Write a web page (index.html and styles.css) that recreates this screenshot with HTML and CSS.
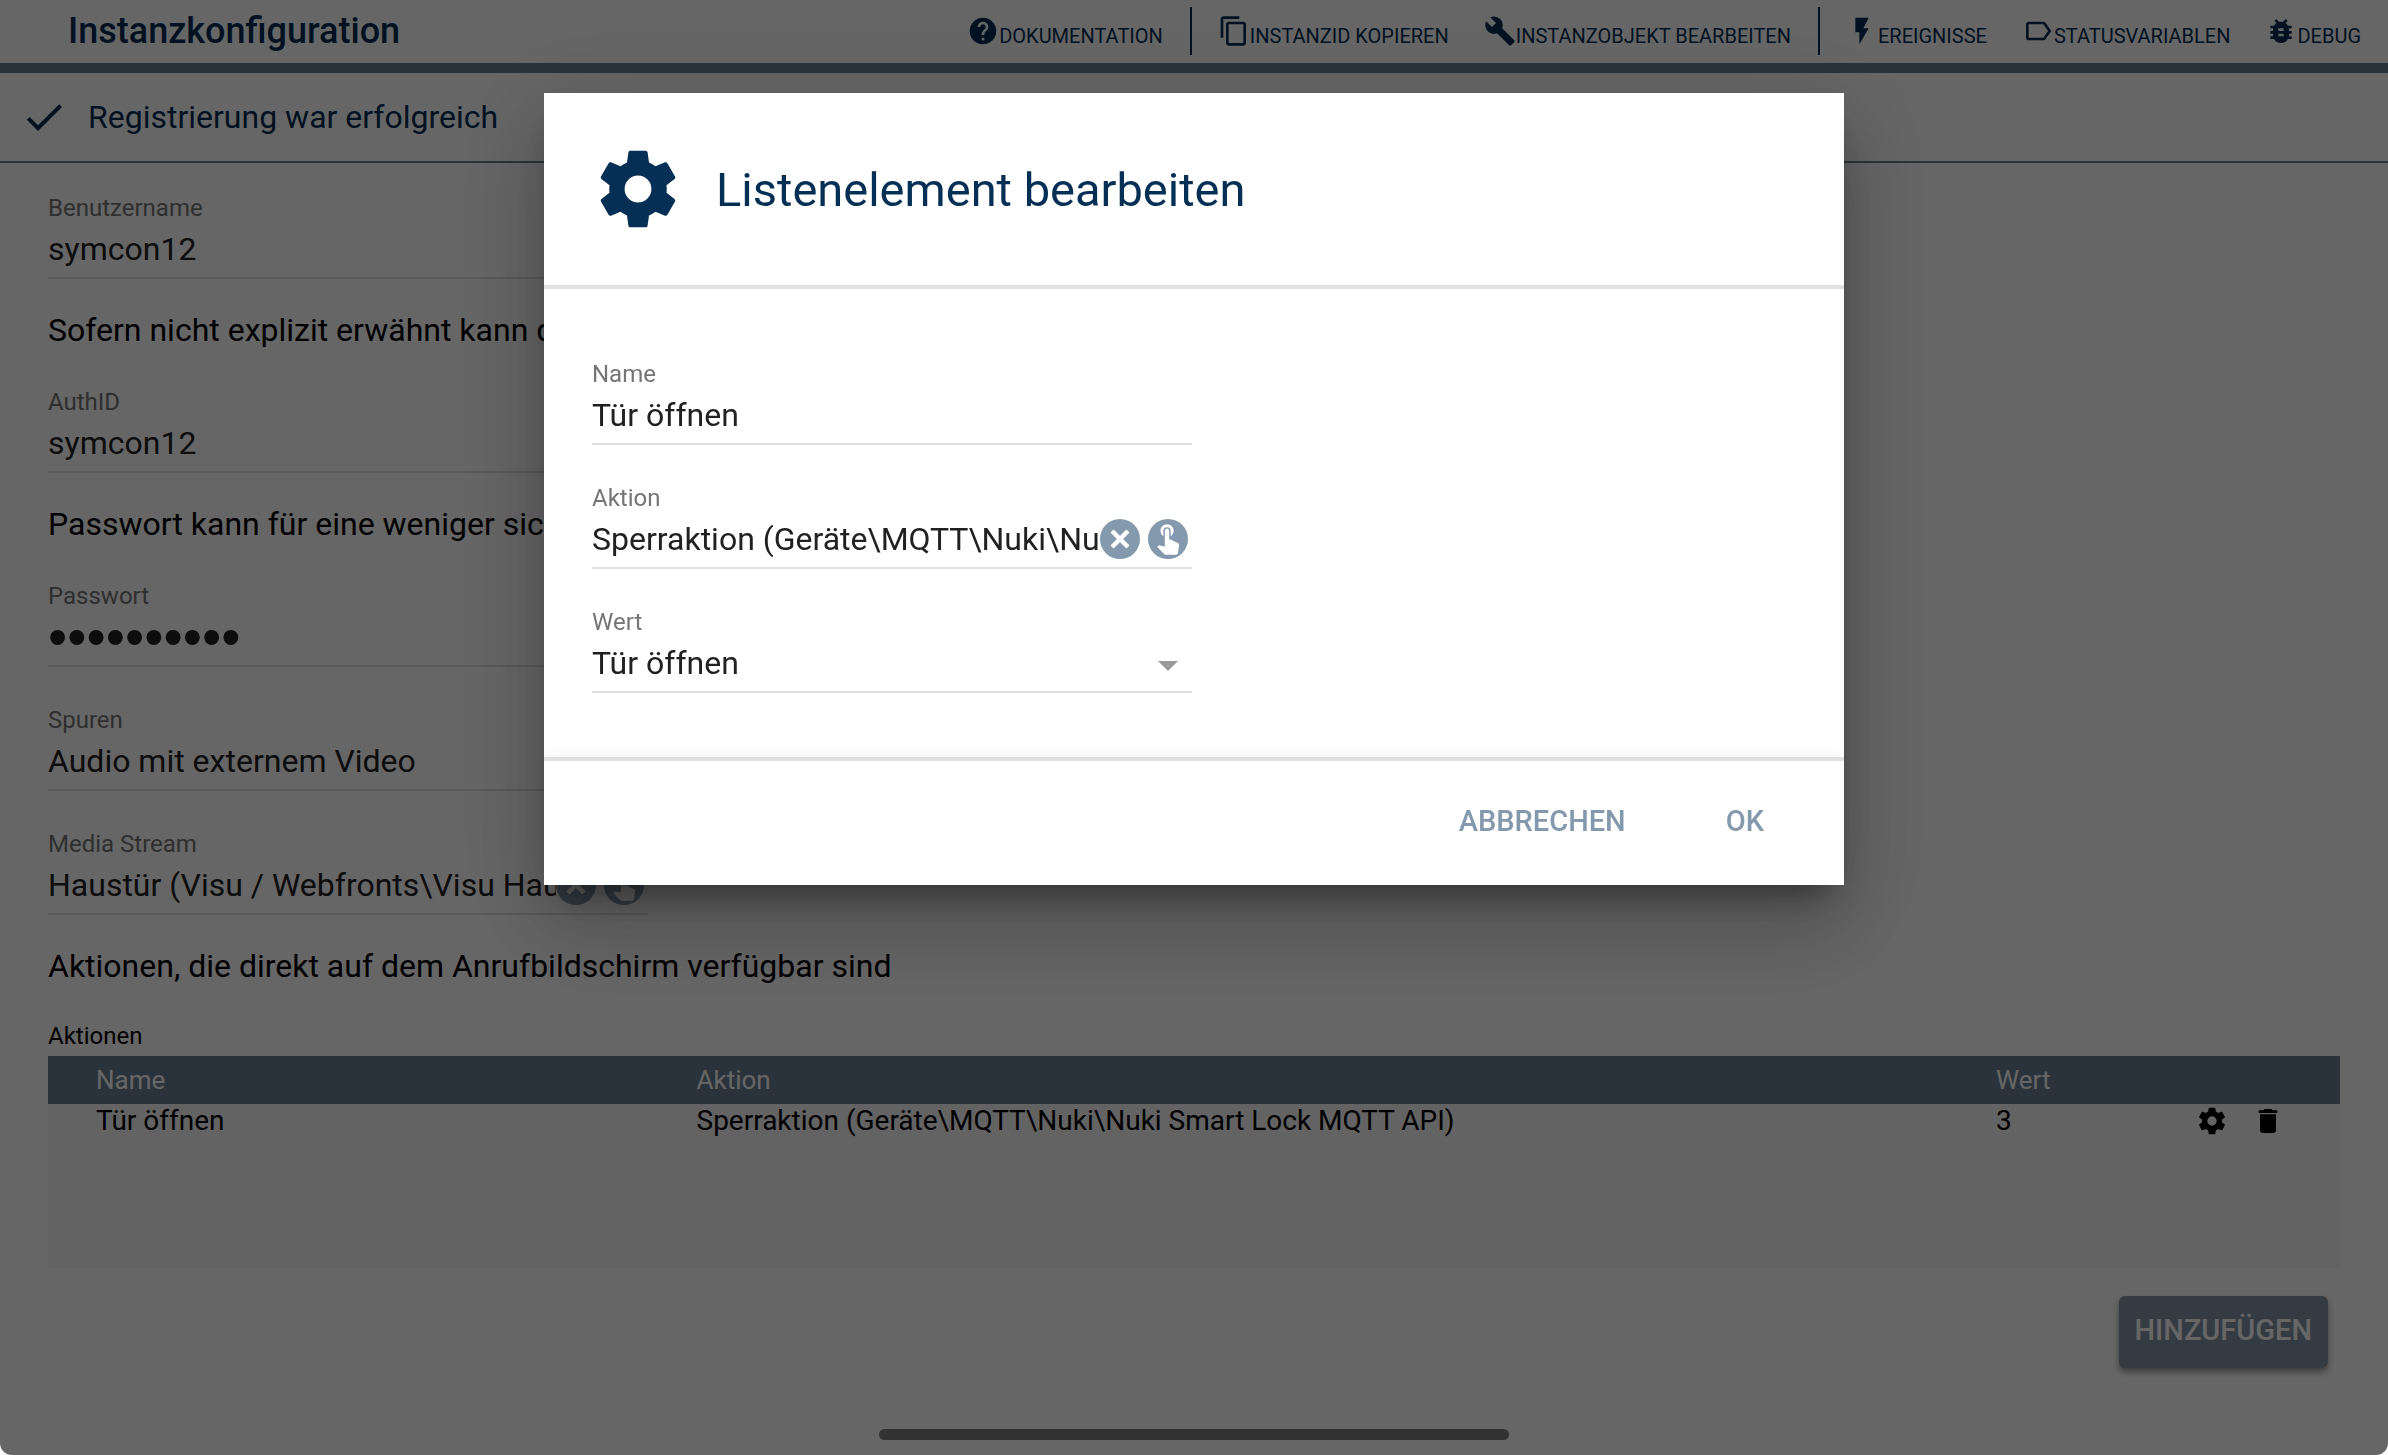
FILE: index.html
```html
<!DOCTYPE html>
<html lang="de">
<head>
    <meta charset="UTF-8">
    <meta name="viewport" content="width=device-width, initial-scale=1.0">
    <title>Instanzkonfiguration</title>
    <link rel="stylesheet" href="styles.css">
</head>
<body>
    <!-- shared icons -->
    <svg class="sprite" aria-hidden="true">
        <symbol id="cog" viewBox="0 0 24 24"><path d="M12 15.5A3.5 3.5 0 0 1 8.5 12 3.5 3.5 0 0 1 12 8.5a3.5 3.5 0 0 1 3.5 3.5 3.5 3.5 0 0 1-3.5 3.5m7.43-2.53c.04-.32.07-.64.07-.97s-.03-.66-.07-1l2.11-1.63c.19-.15.24-.42.12-.64l-2-3.46c-.12-.22-.39-.31-.61-.22l-2.49 1c-.52-.39-1.06-.73-1.69-.98l-.37-2.65A.506.506 0 0 0 14 2h-4c-.25 0-.46.18-.5.42l-.37 2.65c-.63.25-1.17.59-1.69.98l-2.49-1c-.22-.09-.49 0-.61.22l-2 3.46c-.13.22-.07.49.12.64L4.57 11c-.04.34-.07.67-.07 1s.03.65.07.97l-2.11 1.66c-.19.15-.25.42-.12.64l2 3.46c.12.22.39.3.61.22l2.49-1.01c.52.4 1.06.74 1.69.99l.37 2.65c.04.24.25.42.5.42h4c.25 0 .46-.18.5-.42l.37-2.65c.63-.26 1.17-.59 1.69-.99l2.49 1.01c.22.08.49 0 .61-.22l2-3.46c.12-.22.07-.49-.12-.64z"/></symbol>
        <symbol id="close" viewBox="0 0 24 24"><path d="M6 6L18 18M18 6L6 18" fill="none" stroke="currentColor" stroke-width="3.400"/></symbol>
        <symbol id="touch" viewBox="0.500 0.800 24 24"><path d="M9 11.24V7.5a2.5 2.5 0 0 1 5 0v3.74c1.21-.81 2-2.18 2-3.74C16 5.01 13.99 3 11.5 3S7 5.01 7 7.5c0 1.56.79 2.93 2 3.74zm9.84 4.63l-4.54-2.26c-.17-.07-.35-.11-.54-.11H13v-6c0-.83-.67-1.5-1.5-1.5S10 6.67 10 7.5v10.74l-3.43-.72c-.08-.01-.15-.03-.24-.03-.31 0-.59.13-.79.33l-.79.8 4.94 4.94c.27.27.65.44 1.06.44h6.79c.75 0 1.33-.55 1.44-1.28l.75-5.27c.01-.07.02-.14.02-.2 0-.62-.38-1.16-.91-1.38z"/></symbol>
    </svg>

    <header class="topbar">
        <h1>Instanzkonfiguration</h1>
        <nav class="tools">
            <button type="button"><svg viewBox="0 0 24 24"><path d="M12 2C6.48 2 2 6.48 2 12s4.48 10 10 10 10-4.48 10-10S17.52 2 12 2zm1 17h-2v-2h2v2zm2.07-7.75l-.9.92C13.45 12.9 13 13.5 13 15h-2v-.5c0-1.1.45-2.1 1.17-2.83l1.24-1.26c.37-.36.59-.86.59-1.41 0-1.1-.9-2-2-2s-2 .9-2 2H8c0-2.21 1.79-4 4-4s4 1.79 4 4c0 .88-.36 1.68-.93 2.25z"/></svg>DOKUMENTATION</button>
            <span class="divider"></span>
            <button type="button"><svg viewBox="0 0 24 24"><path d="M16 1H4c-1.1 0-2 .9-2 2v14h2V3h12V1zm3 4H8c-1.1 0-2 .9-2 2v14c0 1.1.9 2 2 2h11c1.1 0 2-.9 2-2V7c0-1.1-.9-2-2-2zm0 16H8V7h11v14z"/></svg>INSTANZID KOPIEREN</button>
            <button type="button"><svg viewBox="0 0 24 24"><path d="M22.7 19l-9.1-9.1c.9-2.3.4-5-1.5-6.9-2-2-5-2.4-7.4-1.3L9 6 6 9 1.6 4.7C.4 7.1.9 10.1 2.9 12.1c1.9 1.9 4.6 2.4 6.9 1.5l9.1 9.1c.4.4 1 .4 1.4 0l2.3-2.3c.5-.4.5-1.1.1-1.4z"/></svg>INSTANZOBJEKT BEARBEITEN</button>
            <span class="divider"></span>
            <button type="button"><svg viewBox="0 0 24 24"><path d="M7 2v11h3v9l7-12h-4l4-8z"/></svg>EREIGNISSE</button>
            <button type="button"><svg viewBox="0 0 24 24"><path d="M17.63 5.84C17.27 5.33 16.67 5 16 5L5 5.01C3.9 5.01 3 5.9 3 7v10c0 1.1.9 1.99 2 1.99L16 19c.67 0 1.27-.33 1.63-.84L22 12l-4.37-6.16zM16 17H5V7h11l3.55 5L16 17z"/></svg>STATUSVARIABLEN</button>
            <button type="button"><svg viewBox="0 0 24 24"><path d="M20 8h-2.81c-.45-.78-1.07-1.45-1.82-1.96L17 4.41 15.59 3l-2.17 2.17C12.96 5.06 12.49 5 12 5s-.96.06-1.41.17L8.41 3 7 4.41l1.62 1.63C7.88 6.55 7.26 7.22 6.81 8H4v2h2.09c-.05.33-.09.66-.09 1v1H4v2h2v1c0 .34.04.67.09 1H4v2h2.81c1.04 1.79 2.97 3 5.19 3s4.15-1.21 5.19-3H20v-2h-2.09c.05-.33.09-.66.09-1v-1h2v-2h-2v-1c0-.34-.04-.67-.09-1H20V8zm-6 8h-4v-2h4v2zm0-4h-4v-2h4v2z"/></svg>DEBUG</button>
        </nav>
    </header>

    <div class="status">
        <svg viewBox="0 0 24 24"><path d="M9 16.17L4.83 12l-1.42 1.41L9 19 21 7l-1.41-1.41z"/></svg>
        <span>Registrierung war erfolgreich</span>
    </div>

    <main class="content">
        <div class="field">
            <label for="user">Benutzername</label>
            <div class="control"><input id="user" type="text" value="symcon12"></div>
        </div>
        <p>Sofern nicht explizit erwähnt kann das</p>
        <div class="field">
            <label for="auth">AuthID</label>
            <div class="control"><input id="auth" type="text" value="symcon12"></div>
        </div>
        <p>Passwort kann für eine weniger sichere</p>
        <div class="field">
            <label for="password">Passwort</label>
            <div class="control"><input id="password" type="password" value="0123456789"></div>
        </div>
        <div class="field">
            <label for="tracks">Spuren</label>
            <div class="control select"><select id="tracks"><option>Audio mit externem Video</option></select></div>
        </div>
        <div class="field">
            <label for="stream">Media Stream</label>
            <div class="control">
                <input id="stream" type="text" value="Haustür (Visu / Webfronts\Visu Haustür)" readonly>
                <button class="round" type="button" aria-label="Leeren"><svg><use href="#close"/></svg></button>
                <button class="round touch" type="button" aria-label="Auswählen"><svg><use href="#touch"/></svg></button>
            </div>
        </div>
        <p>Aktionen, die direkt auf dem Anrufbildschirm verfügbar sind</p>

        <div class="list">
            <table>
                <caption>Aktionen</caption>
                <thead>
                    <tr>
                        <th class="col-name">Name</th>
                        <th class="col-action">Aktion</th>
                        <th class="col-value">Wert</th>
                        <th class="col-tools"></th>
                    </tr>
                </thead>
                <tbody>
                    <tr>
                        <td>Tür öffnen</td>
                        <td>Sperraktion (Geräte\MQTT\Nuki\Nuki Smart Lock MQTT API)</td>
                        <td>3</td>
                        <td>
                            <div class="row-tools">
                                <button type="button" aria-label="Bearbeiten"><svg><use href="#cog"/></svg></button>
                                <button type="button" aria-label="Löschen"><svg viewBox="0 0 24 24"><path d="M6 19c0 1.1.9 2 2 2h8c1.1 0 2-.9 2-2V7H6v12zM19 4h-3.500l-1-1h-5l-1 1H5v2h14V4z"/></svg></button>
                            </div>
                        </td>
                    </tr>
                </tbody>
            </table>
        </div>
        <button class="add" type="button">HINZUFÜGEN</button>
    </main>

    <div class="overlay">
        <section class="dialog" role="dialog" aria-modal="true" aria-labelledby="dialog-title">
            <div class="dialog-head">
                <svg><use href="#cog"/></svg>
                <h2 id="dialog-title">Listenelement bearbeiten</h2>
            </div>
            <div class="dialog-body">
                <div class="field">
                    <label for="name">Name</label>
                    <div class="control"><input id="name" type="text" value="Tür öffnen"></div>
                </div>
                <div class="field">
                    <label for="action">Aktion</label>
                    <div class="control">
                        <input id="action" type="text" value="Sperraktion (Geräte\MQTT\Nuki\Nuki Smart Lock MQTT API)" readonly>
                        <button class="round" type="button" aria-label="Leeren"><svg><use href="#close"/></svg></button>
                        <button class="round touch" type="button" aria-label="Auswählen"><svg><use href="#touch"/></svg></button>
                    </div>
                </div>
                <div class="field">
                    <label for="value">Wert</label>
                    <div class="control select"><select id="value"><option>Tür öffnen</option></select></div>
                </div>
            </div>
            <div class="dialog-foot">
                <button type="button">ABBRECHEN</button>
                <button type="button">OK</button>
            </div>
        </section>
    </div>
    <div class="home-bar"></div>
</body>
</html>
```
FILE: styles.css
```css
* {
    box-sizing: border-box;
}

html {
    background: #fff;
}

body {
    margin: 0;
    min-height: 100vh;
    background: #fff;
    color: #000;
    font-family: Roboto, sans-serif;
    font-size: 32px;
}

button,
input,
select {
    margin: 0;
    padding: 0;
    border: none;
    background: none;
    color: inherit;
    font: inherit;
}

button {
    cursor: pointer;
}

svg {
    display: block;
    flex: none;
    fill: currentColor;
}

.sprite {
    display: none;
}

/* top bar */
.topbar {
    display: flex;
    align-items: center;
    justify-content: space-between;
    height: 73px;
    padding: 0 9px 2px 68px;
    border-bottom: 10px solid #698093;
    color: #002f55;
}

.topbar h1 {
    margin: 0;
    font-size: 36px;
    font-weight: 500;
    line-height: 40px;
}

.tools {
    display: flex;
    align-items: center;
}

.tools button {
    display: flex;
    align-items: flex-end;
    padding: 0 18px 0 17px;
    font-size: 20px;
    line-height: 22px;
    white-space: nowrap;
}

.tools svg {
    width: 32px;
    height: 32px;
}

.divider {
    width: 2px;
    height: 48px;
    margin: 0 9px;
    background: #002f55;
}

.status {
    display: flex;
    align-items: center;
    gap: 20px;
    height: 90px;
    padding: 0 20px;
    border-bottom: 2px solid #698093;
    color: #002f55;
}

.status svg {
    width: 48px;
    height: 48px;
}

/* form */
.content {
    display: flex;
    flex-direction: column;
    padding: 8px 48px 80px;
}

.content p {
    margin: 0;
    line-height: 70px;
}

.field {
    width: 600px;
    max-width: 100%;
    padding: 25px 0 16px;
}

.field label {
    display: block;
    color: #757575;
    font-size: 24px;
    line-height: 24px;
}

.control {
    display: flex;
    align-items: center;
    height: 59px;
    border-bottom: 2px solid #e0e0e0;
    color: #212121;
}

.control input,
.control select {
    flex: 1;
    min-width: 0;
    height: 57px;
    outline: none;
    appearance: none;
}

.control input[type="password"] {
    font-family: "Liberation Sans", sans-serif;
    font-size: 55px;
}

.round {
    display: flex;
    align-items: center;
    justify-content: center;
    width: 40px;
    height: 40px;
    border-radius: 50%;
    background: #8499ad;
    color: #fff;
}

.round svg {
    width: 32px;
    height: 32px;
}

.touch {
    margin: 0 4px 0 8px;
}

.touch svg {
    width: 35px;
    height: 35px;
}

.select::after {
    content: "";
    margin: 6px 14px 0 0;
    border: 10px solid transparent;
    border-top-color: #999;
    border-bottom: none;
}

/* list */
.list {
    min-height: 244px;
    margin-top: 23px;
}

table {
    width: 100%;
    border-collapse: collapse;
    table-layout: fixed;
    font-size: 28px;
}

caption {
    padding-bottom: 8px;
    font-size: 24px;
    line-height: 24px;
    text-align: left;
}

th {
    height: 48px;
    padding: 0 0 0 48px;
    background: #698093;
    color: #fff;
    font-size: 26px;
    font-weight: 400;
    text-align: left;
}

td {
    height: 164px;
    padding: 0 0 0 48px;
    background: #f8f8f8;
    line-height: 34px;
    vertical-align: top;
}

.col-name {
    width: 26.2%;
}

.col-action {
    width: 56.7%;
}

.col-value {
    width: 8%;
}

.row-tools {
    display: flex;
    justify-content: flex-end;
    gap: 24px;
    padding-right: 56px;
}

.row-tools svg {
    width: 32px;
    height: 34px;
}

.add {
    align-self: flex-end;
    height: 72px;
    margin: 28px 12px 0 0;
    padding: 0 16px 4px;
    border-radius: 6px;
    background: #8294a8;
    box-shadow: 0 4px 6px rgba(0, 0, 0, 0.4);
    color: #fff;
    font-size: 29px;
    font-weight: 500;
}

/* dialog */
.overlay {
    position: fixed;
    inset: 0;
    display: flex;
    align-items: flex-start;
    justify-content: center;
    padding: 93px 24px 0;
    border-radius: 0 0 12px 12px;
    background: rgba(0, 0, 0, 0.6);
}

.dialog {
    width: 1300px;
    max-width: 100%;
    background: #fff;
    box-shadow: 0 22px 30px -14px rgba(0, 0, 0, 0.4),
        0 48px 76px 6px rgba(0, 0, 0, 0.14),
        0 18px 92px 16px rgba(0, 0, 0, 0.12);
}

.dialog-head {
    display: flex;
    align-items: center;
    gap: 32px;
    height: 196px;
    padding: 0 48px;
    border-bottom: 4px solid #e0e0e0;
    color: #052f54;
}

.dialog-head svg {
    width: 92px;
    height: 92px;
}

.dialog-head h2 {
    margin: 0;
    font-size: 47px;
    font-weight: 400;
}

.dialog-body {
    padding: 48px;
}

.dialog-foot {
    display: flex;
    align-items: center;
    justify-content: flex-end;
    gap: 36px;
    height: 128px;
    padding: 0 48px 4px;
    border-top: 4px solid #e0e0e0;
    box-shadow: 0 -2px 16px rgba(0, 0, 0, 0.04);
}

.dialog-foot button {
    height: 72px;
    padding: 0 32px;
    color: #8499ad;
    font-size: 29px;
    font-weight: 500;
}

.home-bar {
    position: fixed;
    bottom: 15px;
    left: 50%;
    width: 630px;
    height: 11px;
    margin-left: -315px;
    border-radius: 6px;
    background: #323232;
}
```
